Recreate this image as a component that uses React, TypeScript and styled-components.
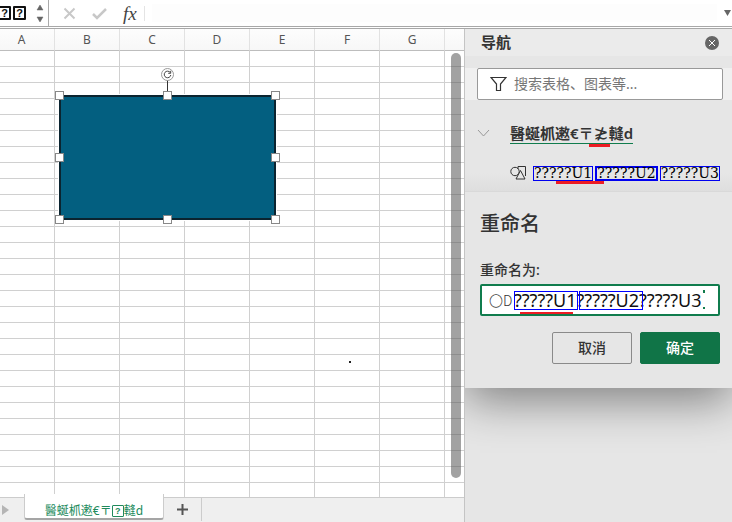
import React from "react";
import styled, { createGlobalStyle } from "styled-components";

const Global = createGlobalStyle`
  * { box-sizing: border-box; }
  body { margin: 0; overflow: hidden; color: #333; font: 14px/20px "Noto Sans", "Noto Sans CJK SC", sans-serif; }
  button, input { font: inherit; color: inherit; margin: 0; }
  button { padding: 0; border: 0; background: none; }
`;
const Page = styled.div`display: flex; flex-direction: column; height: 100vh; background: #fff;`;
const FormulaBar = styled.header`
  display: flex; flex: none; height: 29px; background: #fff;
  border-bottom: 3px double #a8a8a8;
`;
const NameBox = styled.div`
  display: flex; align-items: center; width: 49px; border-right: 1px solid #aaa;
  overflow: hidden;
`;
const Missing = styled.span<{ $small?: boolean }>`
  display: inline-flex; align-items: center; justify-content: center; flex: none;
  width: ${p => (p.$small ? 12 : 13)}px; height: ${p => (p.$small ? 12 : 14)}px; border: ${p => (p.$small ? 1 : 2)}px solid;
  font: bold ${p => (p.$small ? 9 : 11)}px/10px "Liberation Sans", sans-serif; border-radius: 1px;
`;
const NameGlyphs = styled.span`display: flex; gap: 2px; margin-left: -2px; color: #111;`;
const Steps = styled.svg`width: 8px; height: 20px; margin-left: 10px; flex: none;`;
const Tools = styled.div`
  display: flex; align-items: center; padding-left: 14px; gap: 16px; width: 96px;
  border-right: 1px solid #e4e4e4; margin: 6px 0 5px;
`;
const ToolButton = styled.button`display: flex; flex: none;`;
const FxButton = styled.button`font: italic 19px/16px "Liberation Serif", serif; color: #444; height: 20px;`;
const FormulaInput = styled.input`flex: 1; min-width: 0; border: 0; outline: 0; background: #fdfdfd; margin: 4px 7px;`;
const Expand = styled.button`width: 8px; display: flex; align-items: center;`;
const Body = styled.div`display: flex; flex: 1; min-height: 0;`;
const Workbook = styled.main`display: flex; flex-direction: column; flex: 1; min-width: 0;`;
const Canvas = styled.div`position: relative; flex: 1; min-height: 0; overflow: hidden;`;
const Grid = styled.table`
  width: 100%; table-layout: fixed; border-collapse: separate; border-spacing: 0;
  th { height: 22px; padding: 1px 0 0; font: 12px/20px "Noto Sans", sans-serif; color: #555;
    background: linear-gradient(#fdfdfd, #f7f7f7); border-bottom: 1px solid #bdbdbd; border-right: 1px solid #e2e2e2; }
  th:first-child { padding-right: 11px; }
  td { height: 16px; padding: 0; border-right: 1px solid #d0d0d0; border-bottom: 1px solid #d0d0d0; }
  th:last-child, td:last-child { border-right: 0; }
`;
const Col = styled.col<{ $w?: number }>`width: ${p => (p.$w ? p.$w + "px" : "auto")};`;
const ScrollThumb = styled.div`
  position: absolute; right: 3px; top: 24px; bottom: 19px; width: 10px; border-radius: 5px;
  background: rgba(90, 90, 90, .56);
`;
const Shape = styled.div`
  position: absolute; left: 59px; top: 66px; width: 217px; height: 125px;
  background: #035f80; border: 2px solid #0b2430; outline: 1px solid #fff;
`;
const Handles = styled.div`position: absolute; inset: -1px -2px -2px -1px;`;
const Handle = styled.i<{ $x: number; $y: number }>`
  position: absolute; left: calc(${p => p.$x}% - 4px); top: calc(${p => p.$y}% - 4px);
  width: 7px; height: 7px; background: #fff; outline: 1px solid #888;
`;
const Rotate = styled.svg`position: absolute; left: 99px; top: -30px; width: 15px; height: 26px;`;
const Dot = styled.i`position: absolute; left: 349px; top: 332px; width: 2px; height: 2px; background: #222;`;
const TabBar = styled.footer`
  display: flex; flex: none; height: 25px; background: #efefef; border-top: 1px solid #ccc;
`;
const TabScroll = styled.button`width: 24px; display: flex; align-items: center;`;
const Tab = styled.button`
  display: flex; align-items: center; justify-content: center; width: 140px; height: 26px; margin-top: -4px;
  background: #fff; color: #218a5c; border: 1px solid #ccc; border-top: 0; border-bottom: 2px solid #a5a5a5;
  border-radius: 0 0 3px 3px; font-size: 12px; padding-top: 9px; position: relative;
`;
const AddTab = styled.button`width: 38px; display: flex; align-items: center; justify-content: center; border-right: 1px solid #ccc; height: 23px;`;
const Panel = styled.aside`
  width: 268px; flex: none; display: flex; flex-direction: column; background: #e6e6e6; border-left: 1px solid #c4c4c4;
`;
const PanelHead = styled.div`
  height: 27px; display: flex; align-items: center; justify-content: space-between; padding: 0 13px 0 16px; background: #ebebeb;
`;
const PanelTitle = styled.h2`margin: 0; font-size: 15px; line-height: 20px; font-weight: 700; padding-bottom: 2px;`;
const SearchBand = styled.div`margin-top: 12px; background: #f0f0f0; padding: 0 9px 0 12px;`;
const Search = styled.label`
  display: flex; align-items: center; gap: 7px; height: 32px; padding-left: 12px; background: #fff; border: 1px solid #999; border-radius: 2px;
  input { flex: 1; min-width: 0; border: 0; outline: 0; padding: 0; background: none; }
  input::placeholder { color: #767676; opacity: 1; }
`;
const Tree = styled.div`height: 91px; padding: 22px 12px 0 12px; background: linear-gradient(#e6e6e6 80%, #dedede);`;
const SheetRow = styled.div`display: flex; height: 24px; align-items: center; gap: 20px;`;
const Chevron = styled.svg`width: 13px; height: 8px; margin-bottom: 3px;`;
const SheetName = styled.b`
  display: flex; align-items: center; height: 19px; border-bottom: 1px solid #107c4d; font-size: 15px; line-height: 16px; padding-bottom: 2px; font-weight: 600;
`;
const Flagged = styled.span`
  position: relative; font: 18px/16px "DejaVu Sans", sans-serif;
  &::after { content: ""; position: absolute; left: -5px; right: -1px; bottom: -6px; height: 3px; background: #ed1c24; }
`;
const ObjectRow = styled.div`
  display: flex; align-items: center; height: 16px; margin: 19px 0 0 33px; gap: 6px;
`;
const ObjectIcon = styled.svg`width: 17px; height: 15px; margin-bottom: 2px;`;
const ObjectName = styled.div`
  flex: 1; position: relative; display: flex; gap: 2px; font: 14px/13px "DejaVu Serif", serif; color: #000;
  &::after { content: ""; position: absolute; left: 23px; width: 48px; bottom: -3px; height: 3px; background: #ed1c24; }
`;
const Mark = styled.span<{ $thick?: boolean }>`
  height: 15px; border: ${p => (p.$thick ? 2 : 1)}px solid #0000f0;
  display: flex; align-items: center; flex: 1; min-width: 0; justify-content: center;
`;
const Dialog = styled.form`
  padding: 19px 12px 24px 15px; background: #e6e6e6; border-top: 1px solid #d9d9d9; box-shadow: 0 12px 44px rgba(0, 0, 0, .45);
  clip-path: inset(0 0 -110px 0);
`;
const DialogTitle = styled.h1`margin: 0; font-size: 20px; line-height: 26px; font-weight: 500;`;
const Label = styled.label`display: block; margin-top: 23px; font-weight: 500; line-height: 20px;`;
const Field = styled.div`
  position: relative; display: flex; align-items: center; height: 32px; margin-top: 4px; padding-left: 7px;
  border: 2px solid #107c4d; background: #fff; border-radius: 2px;
  input { flex: 1; min-width: 0; border: 0; outline: 0; background: none; padding: 0; font: 18px/24px "Noto Sans", sans-serif; color: #111; }
`;
const Prefix = styled.span`flex: none; width: 25px; font: 300 14px/20px "Noto Sans CJK SC", sans-serif; color: #333;`;
const FieldMark = styled.i<{ $x: number }>`position: absolute; left: ${p => p.$x}px; top: 5px; width: 64px; height: 19px; border: 1px solid #00f;`;
const FieldRule = styled.i`position: absolute; left: 38px; bottom: 0; width: 53px; height: 2px; background: #ed1c24;`;
const CaretEnds = styled.i`
  position: absolute; right: 13px; top: 4px; width: 2px; height: 19px;
  border: solid #107c4d; border-width: 3px 0 2px;
`;
const Actions = styled.div`display: flex; justify-content: flex-end; gap: 8px; margin-top: 16px;`;
const Action = styled.button<{ $primary?: boolean }>`
  width: 80px; height: 32px; border: 1px solid ${p => (p.$primary ? "#107447" : "#8a8a8a")}; border-radius: 2px; font-weight: 500;
  background: ${p => (p.$primary ? "#107447" : "transparent")}; color: ${p => (p.$primary ? "#fff" : "#333")};
`;
const handles = [[0, 0], [50, 0], [100, 0], [0, 50], [100, 50], [0, 100], [50, 100], [100, 100]];
const cols = ["A", "B", "C", "D", "E", "F", "G", ""];

export default function App() {
  return (
    <Page>
      <Global />
      <FormulaBar>
        <NameBox>
          <NameGlyphs><Missing>?</Missing><Missing>?</Missing></NameGlyphs>
          <Steps viewBox="0 0 8 20"><path d="M1 7 4 2l3 5zM1 14h6l-3 5z" fill="#666" stroke="#666" strokeWidth="0.500" /></Steps>
        </NameBox>
        <Tools>
          <ToolButton aria-label="取消"><svg width="13" height="13"><path d="m1.500 1.500 10 10m0-10-10 10" stroke="#c8c8c8" strokeWidth="2" /></svg></ToolButton>
          <ToolButton aria-label="输入"><svg width="15" height="13"><path d="m1 7 4 4 9-9" fill="none" stroke="#c8c8c8" strokeWidth="2.500" /></svg></ToolButton>
          <FxButton aria-label="插入函数">fx</FxButton>
        </Tools>
        <FormulaInput aria-label="公式" />
        <Expand aria-label="展开"><svg width="8" height="6"><path d="M0 0h7L3.500 6z" fill="#666" /></svg></Expand>
      </FormulaBar>
      <Body>
        <Workbook>
          <Canvas>
            <Grid>
              <colgroup><Col $w={55} />{[1, 2, 3, 4, 5, 6].map(i => <Col key={i} $w={65} />)}<Col /></colgroup>
              <thead><tr>{cols.map(c => <th key={c}>{c}</th>)}</tr></thead>
              <tbody>{Array.from({ length: 40 }, (_, r) => <tr key={r}>{cols.map(c => <td key={c} />)}</tr>)}</tbody>
            </Grid>
            <Shape>
              <Rotate viewBox="0 0 15 26">
                <path d="M7.500 13v13" stroke="#333" />
                <circle cx="7.500" cy="7.500" r="6" fill="#fff" stroke="#999" />
                <path d="M10.200 5.500A3.300 3.300 0 1 0 10.800 8M10.700 3.800v2.500H8.200" fill="none" stroke="#444" />
              </Rotate>
              <Handles>{handles.map(([x, y]) => <Handle key={`${x}-${y}`} $x={x} $y={y} />)}</Handles>
            </Shape>
            <Dot />
            <ScrollThumb />
          </Canvas>
          <TabBar>
            <TabScroll aria-label="下一个"><svg width="10" height="12"><path d="M2 1v10l7-5z" fill="#b5b5b5" /></svg></TabScroll>
            <Tab>醫蜒枛遫€〒<Missing $small>?</Missing>䡫d</Tab>
            <AddTab aria-label="新建工作表"><svg width="11" height="11"><path d="M5.500 0v11M0 5.500h11" stroke="#555" strokeWidth="2" /></svg></AddTab>
          </TabBar>
        </Workbook>
        <Panel>
          <PanelHead><PanelTitle>导航</PanelTitle>
            <ToolButton aria-label="关闭"><svg width="14" height="14"><circle cx="7" cy="7" r="7" fill="#666" /><path d="m4 4 6 6m0-6-6 6" stroke="#fff" /></svg></ToolButton>
          </PanelHead>
          <SearchBand>
            <Search>
              <svg width="17" height="16"><path d="M1 1.500h15L10.500 8v6.500h-4V8z" fill="none" stroke="#333" strokeWidth="1.200" /></svg>
              <input aria-label="搜索" placeholder="搜索表格、图表等..." />
            </Search>
          </SearchBand>
          <Tree>
            <SheetRow>
              <Chevron viewBox="0 0 13 8"><path d="m1 1 5.500 6L12 1" fill="none" stroke="#999" /></Chevron>
              <SheetName>醫蜒枛遫€〒<Flagged>≵</Flagged>䡫d</SheetName>
            </SheetRow>
            <ObjectRow>
              <ObjectIcon viewBox="0 0 17 15" fill="none" stroke="#333"><path d="M8 4V1.500h7.500V11" /><circle cx="5" cy="6.500" r="4.200" /><path d="m10.500 5.500 4.500 8.500H6z" fill="#e6e6e6" /></ObjectIcon>
              <ObjectName><Mark>?????U1</Mark><Mark $thick>?????U2</Mark><Mark>?????U3</Mark></ObjectName>
            </ObjectRow>
          </Tree>
          <Dialog onSubmit={e => e.preventDefault()}>
            <DialogTitle>重命名</DialogTitle>
            <Label htmlFor="name">重命名为:</Label>
            <Field><Prefix>〇D</Prefix><input id="name" defaultValue="?????U1?????U2?????U3" /><FieldMark $x={32} /><FieldMark $x={97} /><FieldRule /><CaretEnds /></Field>
            <Actions><Action type="button">取消</Action><Action $primary>确定</Action></Actions>
          </Dialog>
        </Panel>
      </Body>
    </Page>
  );
}
